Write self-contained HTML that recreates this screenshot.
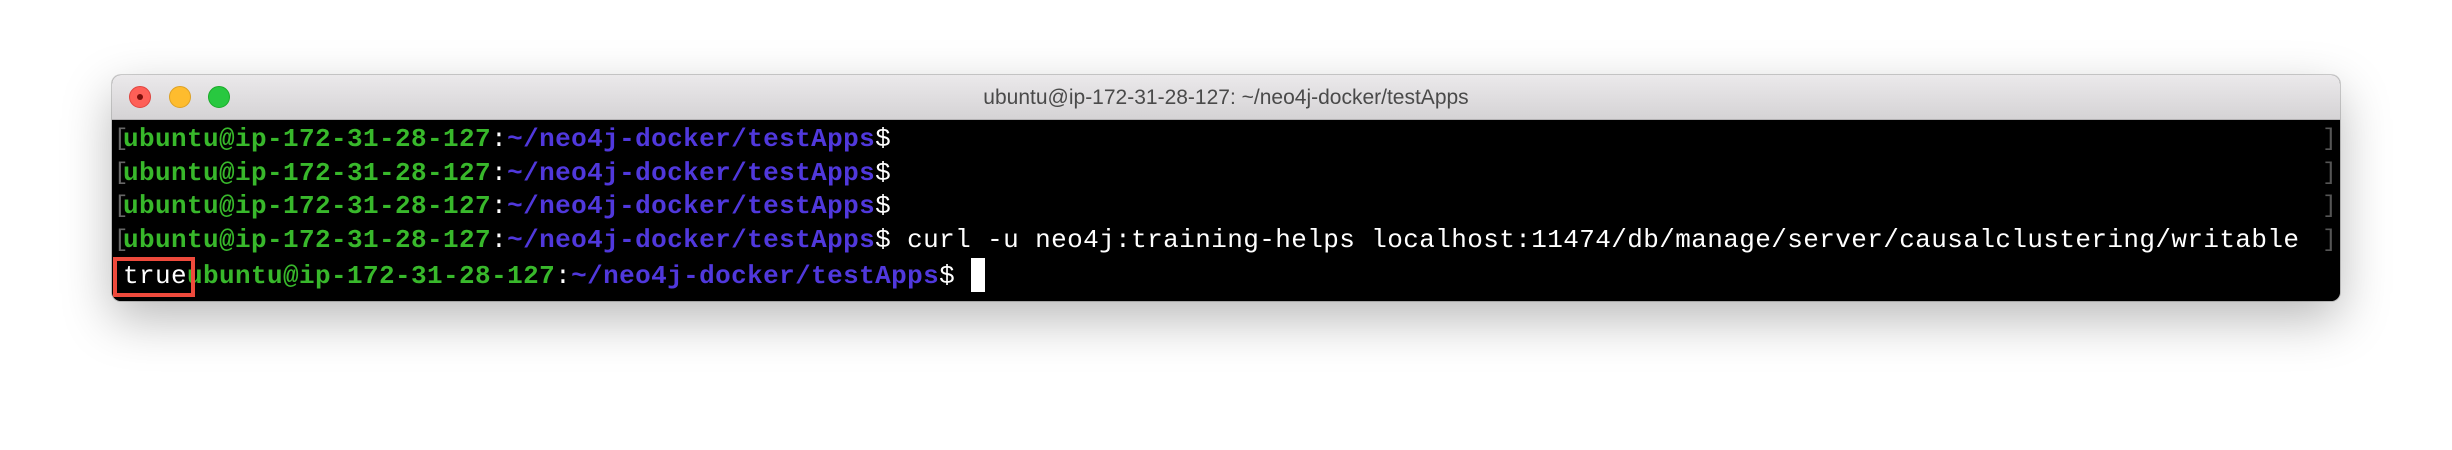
<!DOCTYPE html>
<html><head><meta charset="utf-8"><style>
html,body{margin:0;padding:0;background:#fff;width:2452px;height:450px;overflow:hidden}
.win{position:absolute;left:112px;top:75px;width:2228px;height:226px;border-radius:9px;overflow:hidden;box-shadow:0 18px 50px rgba(0,0,0,0.28),0 0 0 1px rgba(0,0,0,0.18);background:#000}
.tb{position:absolute;left:0;top:0;right:0;height:44px;background:linear-gradient(#ebe9eb,#d5d3d5);border-bottom:1px solid #b4b2b4;font-family:"Liberation Sans",sans-serif;font-size:21px;color:#4a4a4a;text-align:center;line-height:45px}
.dot{position:absolute;top:11px;width:22px;height:22px;border-radius:50%}
.term{position:absolute;left:0;top:45px;right:0;bottom:0;background:#000;font-family:"Liberation Mono",monospace;font-size:26px;letter-spacing:0.4px;line-height:33.7px;font-weight:bold;padding-top:3px;color:#fff}
.l{position:relative;height:33.7px;padding-left:11px;white-space:pre}
.g{color:#38b82b}.p{color:#5038dc}.w{color:#fff;font-weight:normal}
.br{position:absolute;left:2px;top:0;color:#666;font-weight:normal;font-size:24px}
.rb{position:absolute;right:3px;top:0;color:#555;font-weight:normal;font-size:24px}
</style></head><body>
<div class="win">
<div class="tb">ubuntu@ip-172-31-28-127: ~/neo4j-docker/testApps
<div class="dot" style="left:17px;background:#fe5f57;border:1px solid #e0443e;box-sizing:border-box"><div style="position:absolute;left:7px;top:7px;width:6px;height:6px;border-radius:50%;background:#7a0f0b"></div></div>
<div class="dot" style="left:57px;background:#febc2e;border:1px solid #dea123;box-sizing:border-box"></div>
<div class="dot" style="left:96px;background:#28c840;border:1px solid #1aab29;box-sizing:border-box"></div>
</div>
<div class="term"><div class="l"><span class="br">[</span><span class="g">ubuntu@ip-172-31-28-127</span><span class="w">:</span><span class="p">~/neo4j-docker/testApps</span><span class="w">$</span><span class="rb">]</span></div><div class="l"><span class="br">[</span><span class="g">ubuntu@ip-172-31-28-127</span><span class="w">:</span><span class="p">~/neo4j-docker/testApps</span><span class="w">$</span><span class="rb">]</span></div><div class="l"><span class="br">[</span><span class="g">ubuntu@ip-172-31-28-127</span><span class="w">:</span><span class="p">~/neo4j-docker/testApps</span><span class="w">$</span><span class="rb">]</span></div><div class="l"><span class="br">[</span><span class="g">ubuntu@ip-172-31-28-127</span><span class="w">:</span><span class="p">~/neo4j-docker/testApps</span><span class="w">$ curl -u neo4j:training-helps localhost:11474/db/manage/server/causalclustering/writable</span><span class="rb">]</span></div><div class="l"><span class="w">true</span><span class="g">ubuntu@ip-172-31-28-127</span><span class="w">:</span><span class="p">~/neo4j-docker/testApps</span><span class="w">$ </span><span style="display:inline-block;width:14px;height:34px;background:#fff;vertical-align:-9px"></span><div style="position:absolute;left:1px;top:-1px;width:82px;height:40px;border:4px solid #ee4a3c;box-sizing:border-box"></div></div></div>
</div>
</body></html>
